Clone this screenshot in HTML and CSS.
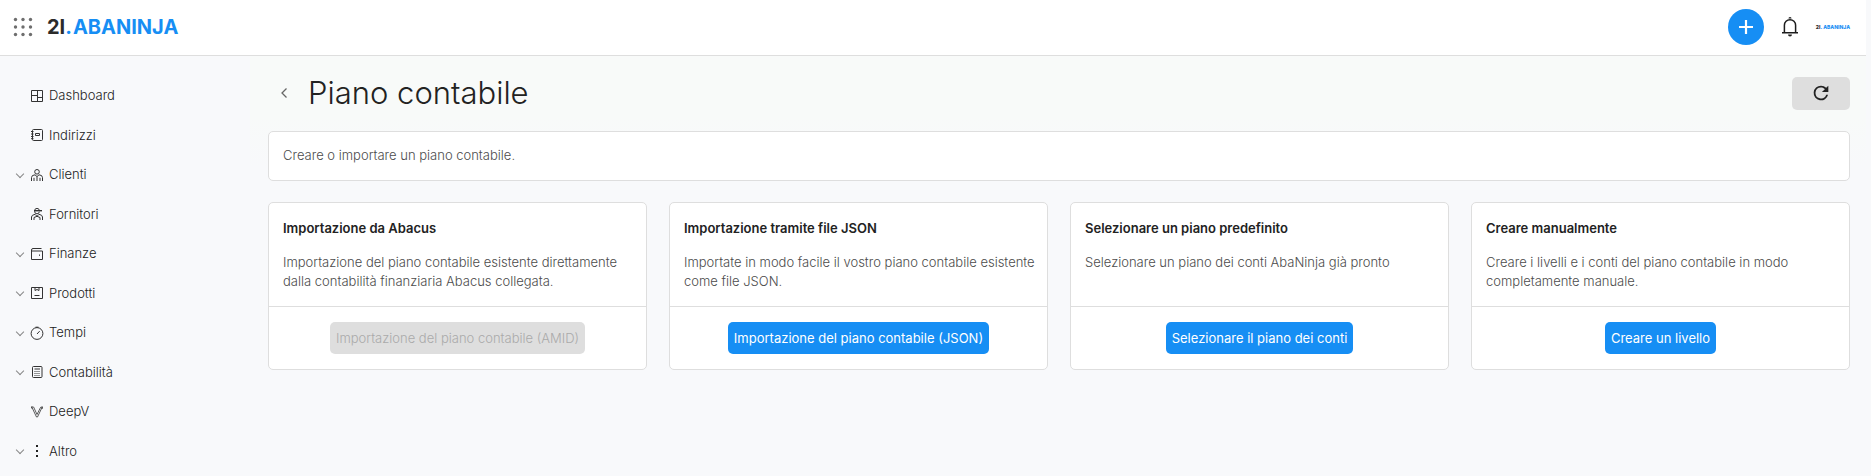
FILE: index.html
```html
<!DOCTYPE html>
<html lang="it">
<head>
<meta charset="UTF-8" />
<meta name="viewport" content="width=device-width, initial-scale=1" />
<title>Piano contabile - AbaNinja</title>
<link rel="stylesheet" href="styles.css">
</head>
<body>

<header class="topbar">
  <button class="icon-btn apps" type="button" aria-label="App">
    <svg width="20" height="20" viewBox="0 0 20 20" fill="#6e6e6e">
      <circle cx="2.5" cy="2.5" r="1.7"/><circle cx="10" cy="2.5" r="1.7"/><circle cx="17.5" cy="2.5" r="1.7"/>
      <circle cx="2.5" cy="10" r="1.7"/><circle cx="10" cy="10" r="1.7"/><circle cx="17.5" cy="10" r="1.7"/>
      <circle cx="2.5" cy="17.5" r="1.7"/><circle cx="10" cy="17.5" r="1.7"/><circle cx="17.5" cy="17.5" r="1.7"/>
    </svg>
  </button>
  <a class="logo" href="#">2I<span>.</span><span class="name">ABANINJA</span></a>
  <div class="actions">
    <button class="add" type="button" aria-label="Aggiungi">
      <svg width="14" height="14" viewBox="0 0 14 14" stroke="#fff" stroke-width="2.2"><path d="M7 0v14M0 7h14"/></svg>
    </button>
    <button class="icon-btn" type="button" aria-label="Notifiche">
      <svg width="16" height="20" viewBox="0 0 16 20" fill="none" stroke="#1d1d1d" stroke-width="1.5">
        <path d="M0 15.8h16M2.4 15.8V8.3a5.6 5.6 0 0 1 11.2 0v7.5"/>
        <path d="M6.4 1.6a1.6 1.6 0 0 1 3.2 0z" fill="#1d1d1d" stroke="none"/>
        <path d="M6 17.5h4a2 2 0 0 1-4 0z" fill="#1d1d1d" stroke="none"/>
      </svg>
    </button>
    <a class="logo logo-small" href="#">2I<span>.</span><span class="name">ABANINJA</span></a>
  </div>
</header>

<div class="layout">
  <nav class="sidebar">
    <a class="item" href="#">
      <svg class="icon" viewBox="0 0 12 12"><path d="M.5.5h11v11H.5zM6.5.5v11M.5 5.5h6M6.5 7.5h5"/></svg>
      Dashboard
    </a>
    <a class="item" href="#">
      <svg class="icon" viewBox="0 0 12 12"><rect x="1.500" y=".5" width="10" height="11" rx="1"/><path d="M4.500 4.500h4v2h-4zM0 2.500h2.500M0 5h2.500M0 7.500h2.500M0 9.700h2.500"/></svg>
      Indirizzi
    </a>
    <a class="item sub" href="#">
      <svg class="icon" viewBox="0 0 12 12"><circle cx="6" cy="2.800" r="2.300"/><path d="M.5 12V8.600Q.5 6 4 5.800L6 7.600l2-1.800q3.500.2 3.500 2.800V12M3 12V8.800M9 12V8.800M6 7.600V12"/></svg>
      Clienti
    </a>
    <a class="item" href="#">
      <svg class="icon" viewBox="0 0 12 12"><path d="M3.700 2.500a2.300 2.100 0 0 1 4.600 0M3.700 2.500v1.200a2.300 2.100 0 0 0 4.600 0"/><path d="M3 2.700h8" stroke-width="1.400"/><path d="M.5 12V9Q.5 7 4 6.300l2 2 2-2q3.500.7 3.500 2.700v3M3 12V9.500L6 8.300l3 1.200V12"/></svg>
      Fornitori
    </a>
    <a class="item sub" href="#">
      <svg class="icon" viewBox="0 0 12 12"><path d="M10.500.5H2Q.5.5.5 2v9.500h11V3H.5"/><path d="M8.500 6.500v1.300"/></svg>
      Finanze
    </a>
    <a class="item sub" href="#">
      <svg class="icon" viewBox="0 0 12 12"><path d="M.5.5h11v11H.5zM4 .5v3l2-1 2 1v-3M3.500 8.500h5"/></svg>
      Prodotti
    </a>
    <a class="item sub" href="#">
      <svg class="icon" viewBox="0 0 12 12"><circle cx="6" cy="6.500" r="5.900"/><path d="M6 7l2.700-2.900M4.500.2h3"/></svg>
      Tempi
    </a>
    <a class="item sub" href="#">
      <svg class="icon" viewBox="0 0 12 12"><rect x="1.500" y=".5" width="9.500" height="11" rx="1"/><path d="M3.500 3h5.500"/><path d="M3.500 5.500h5.500M3.500 7.500h5.500M3.500 9.500h5.500" stroke-dasharray="1 1"/></svg>
      Contabilità
    </a>
    <a class="item" href="#">
      <svg class="icon" viewBox="0 0 12 12"><path d="M.7.8L5.500 11h1L11.300.8M2.500.8L6 8.500 9.500 1.500M9.300 1.500l2-.7.2 2M.7 2.500L.5.8l1.800.2" stroke-width=".8"/></svg>
      DeepV
    </a>
    <a class="item sub" href="#">
      <svg class="icon" viewBox="0 0 12 12"><path d="M5 0h2v2H5zM5 5h2v2H5zM5 10h2v2H5z" fill="#222" stroke="none"/></svg>
      Altro
    </a>
  </nav>

  <main class="content">
    <div class="page-head">
      <button class="icon-btn back" type="button" aria-label="Indietro">
        <svg width="6" height="10" viewBox="0 0 6 10" fill="none" stroke="#666" stroke-width="1.300"><path d="M5.500.5L1 5l4.500 4.500"/></svg>
      </button>
      <h1>Piano contabile</h1>
      <button class="refresh" type="button" aria-label="Aggiorna">
        <svg width="24" height="24" viewBox="0 0 24 24" fill="#222"><path d="M17.650 6.350A7.960 7.960 0 0 0 12 4a8 8 0 1 0 7.730 10h-2.080A6 6 0 1 1 12 6c1.660 0 3.140.69 4.220 1.780L13 11h7V4z"/></svg>
      </button>
    </div>

    <p class="panel intro">Creare o importare un piano contabile.</p>

    <div class="cards">
      <section class="panel card">
        <div class="card-body">
          <h2>Importazione da Abacus</h2>
          <p>Importazione del piano contabile esistente direttamente dalla contabilità finanziaria Abacus collegata.</p>
        </div>
        <div class="card-foot"><button class="btn" type="button" disabled>Importazione del piano contabile (AMID)</button></div>
      </section>
      <section class="panel card">
        <div class="card-body">
          <h2>Importazione tramite file JSON</h2>
          <p>Importate in modo facile il vostro piano contabile esistente come file JSON.</p>
        </div>
        <div class="card-foot"><button class="btn" type="button">Importazione del piano contabile (JSON)</button></div>
      </section>
      <section class="panel card">
        <div class="card-body">
          <h2>Selezionare un piano predefinito</h2>
          <p>Selezionare un piano dei conti AbaNinja già pronto</p>
        </div>
        <div class="card-foot"><button class="btn" type="button">Selezionare il piano dei conti</button></div>
      </section>
      <section class="panel card">
        <div class="card-body">
          <h2>Creare manualmente</h2>
          <p>Creare i livelli e i conti del piano contabile in modo completamente manuale.</p>
        </div>
        <div class="card-foot"><button class="btn" type="button">Creare un livello</button></div>
      </section>
    </div>
  </main>
</div>

</body>
</html>
```
FILE: styles.css
```css
* {
  box-sizing: border-box;
}

body {
  margin: 0;
  padding-right: 5px;
  min-height: 100vh;
  display: flex;
  flex-direction: column;
  background: #f8f9fb;
  font-family: Inter, sans-serif;
  font-size: 13px;
  line-height: 19px;
  color: #222;
}

h1, h2, p {
  margin: 0;
}

button {
  font: inherit;
  border: 0;
  padding: 0;
  cursor: pointer;
}

svg {
  display: block;
}

.topbar {
  height: 56px;
  display: flex;
  align-items: center;
  padding: 0 16px 2px 13px;
  background: #fff;
  border-bottom: 1px solid #dedede;
}

.icon-btn {
  background: none;
}

.logo {
  margin-left: 14px;
  font-size: 20px;
  line-height: 24px;
  font-weight: 700;
  color: #2b2b2b;
  text-decoration: none;
}

.logo span {
  color: #168ef4;
}

.logo .name {
  margin-left: 1px;
}

.actions {
  margin-left: auto;
  display: flex;
  align-items: center;
  gap: 18px;
}

.add {
  width: 36px;
  height: 36px;
  display: flex;
  align-items: center;
  justify-content: center;
  border-radius: 50%;
  background: #168ef4;
}

.logo-small {
  margin-left: 0;
  font-size: 5px;
  font-weight: 800;
}

.layout {
  flex: 1;
  display: flex;
}

/* Menu laterale */
.sidebar {
  width: 250px;
  flex: none;
  display: flex;
  flex-direction: column;
  padding: 20px 0 5px 15px;
}

.item {
  position: relative;
  flex: 1;
  max-height: 40px;
  display: flex;
  align-items: center;
  gap: 6px;
  padding-left: 16px;
  font-weight: 300;
  color: #222;
  text-decoration: none;
}

.item.sub::before {
  content: "";
  position: absolute;
  left: 2px;
  width: 5px;
  height: 5px;
  border: solid #888;
  border-width: 0 1px 1px 0;
  transform: translateY(-1px) rotate(45deg);
}

.icon {
  width: 12px;
  height: 12px;
  fill: none;
  stroke: #333;
  stroke-width: 1;
  overflow: visible;
}

.content {
  flex: 1;
  min-width: 0;
  padding: 16px 16px 16px 18px;
  background: linear-gradient(#f8faf9, #f8faf9 60px, #f8f9fb 110px);
}

.page-head {
  display: flex;
  align-items: center;
  height: 42px;
}

.back {
  padding: 8px 13px;
}

h1 {
  margin-left: 8px;
  font-size: 31px;
  line-height: 40px;
  font-weight: 300;
}

.refresh {
  margin-left: auto;
  width: 58px;
  height: 33px;
  display: flex;
  align-items: center;
  justify-content: center;
  border-radius: 5px;
  background: #dedede;
}

.refresh svg {
  width: 22px;
  height: 22px;
}

.panel {
  background: #fff;
  border: 1px solid #dedede;
  border-radius: 5px;
}

.intro {
  margin: 17px 0 21px;
  padding: 14px 14px 15px;
  font-weight: 300;
  color: #4c4c4c;
}

.cards {
  display: grid;
  grid-template-columns: repeat(4, 1fr);
  gap: 22px;
}

.card {
  display: flex;
  flex-direction: column;
}

.card-body {
  flex: 1;
  padding: 16px 8px 15px 14px;
}

h2 {
  margin-bottom: 15px;
  font-size: 13px;
  font-weight: 600;
}

.card p {
  font-weight: 300;
  color: #4c4c4c;
}

.card-foot {
  display: flex;
  justify-content: center;
  padding: 15px;
  border-top: 1px solid #dedede;
}

.btn {
  height: 32px;
  padding: 0 6px;
  border-radius: 5px;
  background: #168ef4;
  color: #fff;
  font-weight: 400;
}

.btn:disabled {
  background: #dedede;
  color: #aaa;
  font-weight: 300;
  cursor: default;
}
```
